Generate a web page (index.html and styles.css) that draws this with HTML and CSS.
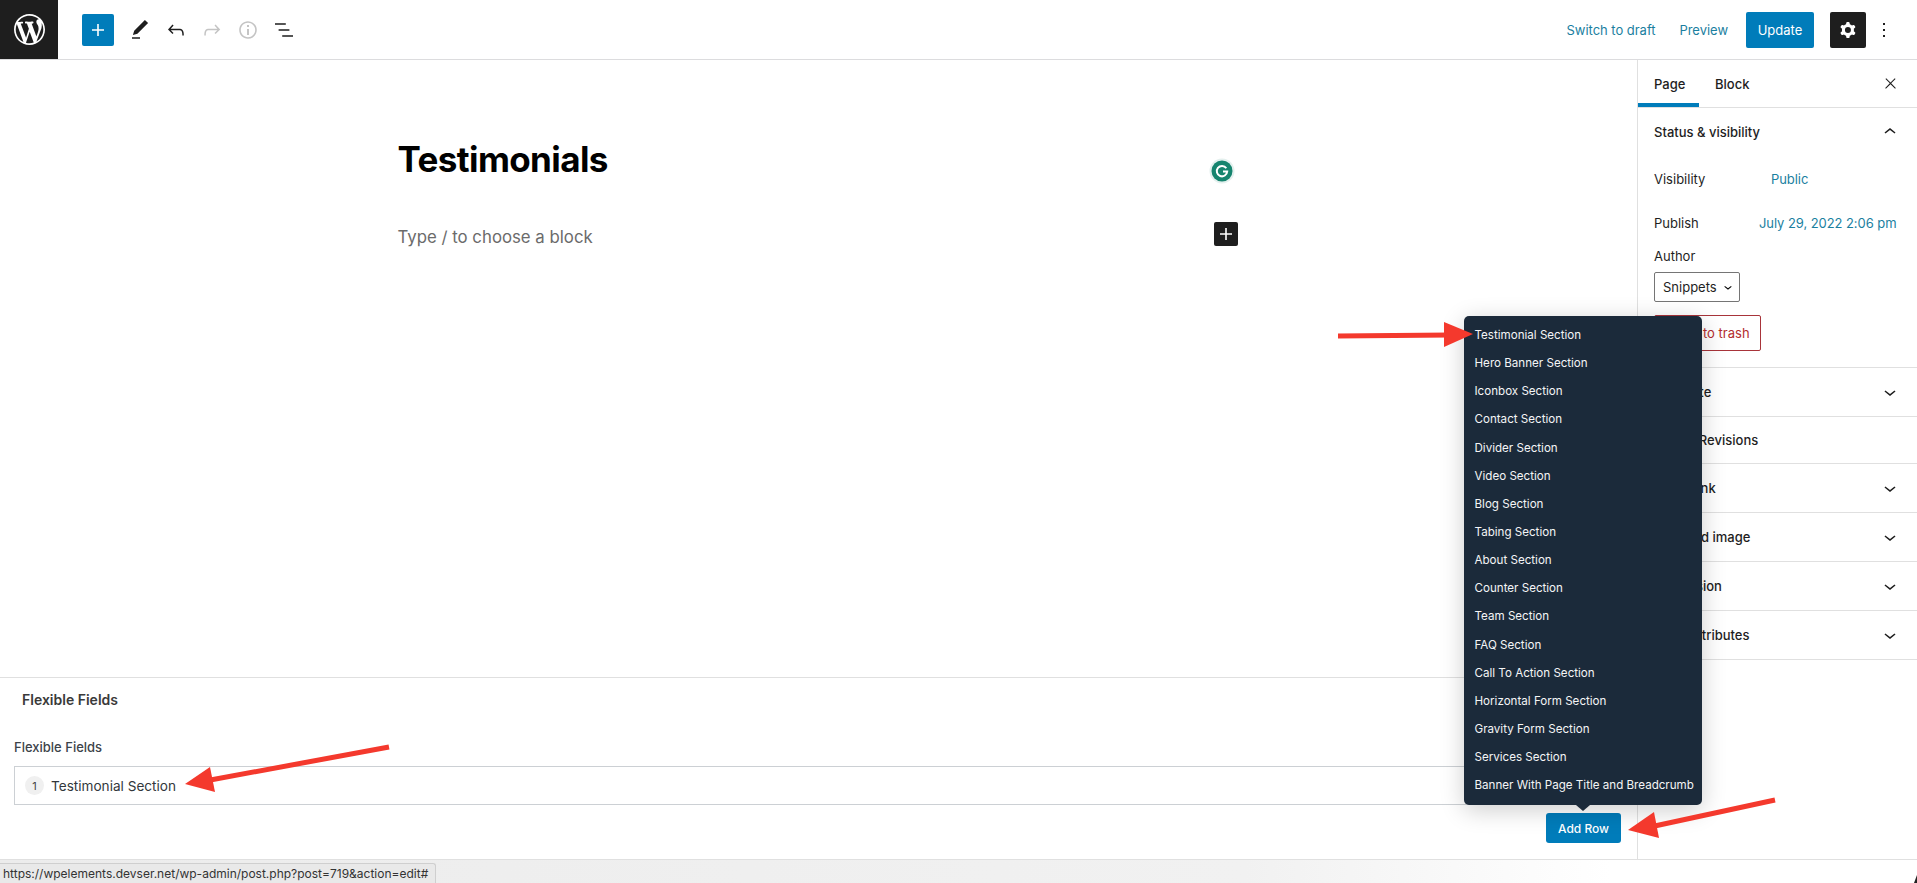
FILE: index.html
```html
<!DOCTYPE html>
<html lang="en">
<head>
<meta charset="utf-8">
<title>Edit Page</title>
<link rel="stylesheet" href="styles.css">
</head>
<body>
<div class="page">
  <header class="topbar">
    <a class="logo"><svg viewBox="0 0 20 20" width="31" height="31"><path fill="#fff" d="M20 10c0-5.51-4.49-10-10-10C4.48 0 0 4.49 0 10c0 5.52 4.48 10 10 10 5.51 0 10-4.48 10-10zM7.78 15.37L4.37 6.22c.55-.02 1.17-.08 1.17-.08.5-.06.44-1.13-.06-1.11 0 0-1.45.11-2.37.11-.18 0-.37 0-.58-.01C4.12 2.69 6.87 1.11 10 1.11c2.33 0 4.45.87 6.05 2.34-.68-.11-1.65.39-1.65 1.58 0 .74.45 1.36.9 2.1.35.61.55 1.36.55 2.46 0 1.49-1.4 5-1.4 5l-3.03-8.37c.54-.02.82-.17.82-.17.5-.05.44-1.25-.06-1.22 0 0-1.44.12-2.38.12-.87 0-2.33-.12-2.33-.12-.5-.03-.56 1.2-.06 1.22l.92.08 1.26 3.41zM17.41 10c.24-.64.74-1.87.43-4.25.7 1.29 1.05 2.71 1.05 4.25 0 3.29-1.73 6.24-4.4 7.78.97-2.59 1.94-5.2 2.92-7.78zM6.1 18.09C3.12 16.65 1.11 13.53 1.11 10c0-1.3.23-2.48.72-3.59C3.25 10.3 4.67 14.2 6.1 18.09zm4.03-6.63l2.58 6.98c-.86.29-1.76.45-2.71.45-.79 0-1.57-.11-2.29-.33.81-2.38 1.62-4.74 2.42-7.1z"/></svg></a>
    <div class="tools">
      <span class="add-btn"><svg viewBox="0 0 24 24" width="24" height="24"><path fill="#fff" d="M18 11.2h-5.2V6h-1.6v5.2H6v1.6h5.2V18h1.6v-5.2H18z"/></svg></span>
      <span class="tool"><svg viewBox="0 0 24 24" width="24" height="24"><path d="M20.1 5.1L16.9 2 6.2 12.7l-1.3 4.4 4.5-1.3L20.1 5.1zM4 20.8h8v-1.5H4v1.5z"/></svg></span>
      <span class="tool"><svg viewBox="0 0 24 24" width="24" height="24"><path d="M18.3 11.7c-.6-.6-1.4-.9-2.3-.9H6.7l2.9-3.3-1.1-1-4.5 5L8.5 16l1-1-2.7-2.7H16c.5 0 .9.2 1.3.5 1 1 1 3.4 1 4.5v.3h1.5v-.2c0-1.5 0-4.3-1.5-5.7z"/></svg></span>
      <span class="tool tool-off"><svg viewBox="0 0 24 24" width="24" height="24"><path d="M15.6 6.5l-1.1 1 2.9 3.3H8c-.9 0-1.7.3-2.3.9-1.4 1.5-1.4 4.2-1.4 5.6v.2h1.5v-.3c0-1.1 0-3.5 1-4.5.3-.3.7-.5 1.3-.5h9.2L14.5 15l1.1 1.1 4.6-4.6-4.6-5z"/></svg></span>
      <span class="tool tool-off"><svg viewBox="0 0 24 24" width="24" height="24"><path d="M12 3.2c-4.8 0-8.8 3.9-8.8 8.8 0 4.8 3.9 8.8 8.8 8.8 4.8 0 8.8-3.9 8.8-8.8 0-4.8-4-8.8-8.8-8.8zm0 16c-4 0-7.2-3.3-7.2-7.2C4.8 8 8 4.8 12 4.8s7.2 3.3 7.2 7.2c0 4-3.2 7.2-7.2 7.2zM11 17h2v-6h-2v6zm0-8h2V7h-2v2z"/></svg></span>
      <span class="tool"><svg viewBox="0 0 24 24" width="24" height="24"><path d="M13.8 5.2H3v1.5h10.8V5.2zm-3.6 12v1.5H21v-1.5H10.2zm7.2-6H6.6v1.5h10.8v-1.5z"/></svg></span>
    </div>
    <div class="actions">
      <a class="link link-draft">Switch to draft</a>
      <a class="link link-preview">Preview</a>
      <span class="update">Update</span>
      <span class="gear"><svg viewBox="0 0 24 24" width="24" height="24"><path fill="#fff" fill-rule="evenodd" d="M10.289 4.836A1 1 0 0111.275 4h1.306a1 1 0 01.987.836l.244 1.466c.787.26 1.503.679 2.108 1.218l1.393-.522a1 1 0 011.216.437l.653 1.13a1 1 0 01-.23 1.273l-1.148.944a6.025 6.025 0 010 2.435l1.149.946a1 1 0 01.23 1.272l-.653 1.13a1 1 0 01-1.216.437l-1.394-.522c-.605.54-1.32.958-2.108 1.218l-.244 1.466a1 1 0 01-.987.836h-1.306a1 1 0 01-.986-.836l-.244-1.466a5.995 5.995 0 01-2.108-1.218l-1.394.522a1 1 0 01-1.217-.436l-.653-1.131a1 1 0 01.23-1.272l1.149-.946a6.026 6.026 0 010-2.435l-1.148-.944a1 1 0 01-.23-1.272l.653-1.131a1 1 0 011.217-.437l1.393.522a5.994 5.994 0 012.108-1.218l.244-1.466zM14.929 12a3 3 0 11-6 0 3 3 0 016 0z"/></svg></span>
      <span class="tool"><svg viewBox="0 0 24 24" width="24" height="24"><path d="M13 19h-2v-2h2v2zm0-6h-2v-2h2v2zm0-6h-2V5h2v2z"/></svg></span>
    </div>
  </header>

  <div class="workspace">
    <main class="editor">
      <div class="canvas">
        <div class="doc">
          <h1 class="doc-title">Testimonials</h1>
          <p class="doc-placeholder">Type / to choose a block</p>
        </div>
      </div>
      <section class="metabox">
        <h2 class="metabox-title">Flexible Fields</h2>
        <div class="metabox-body">
          <div class="field-label">Flexible Fields</div>
          <div class="field-row"><span class="row-num">1</span><span class="row-name">Testimonial Section</span></div>
          <div class="field-foot"><span class="add-row">Add Row</span></div>
        </div>
      </section>
    </main>

    <aside class="sidebar">
      <div class="tabs">
        <span class="tab tab-on">Page</span>
        <span class="tab">Block</span>
        <svg class="tab-close" viewBox="0 0 24 24" width="17" height="17"><path d="M13 11.8l6.1-6.3-1-1-6.1 6.2-6.1-6.2-1 1 6.1 6.3-6.5 6.7 1 1 6.5-6.6 6.5 6.6 1-1z"/></svg>
      </div>
      <section class="status">
        <div class="panel-head"><span>Status &amp; visibility</span><svg viewBox="0 0 24 24" width="24" height="24"><path d="M6.5 12.4L12 8l5.5 4.4-.9 1.2L12 10l-4.5 3.6-1-1.2z"/></svg></div>
        <div class="status-row status-vis"><span>Visibility</span><a class="val val-public">Public</a></div>
        <div class="status-row status-pub"><span>Publish</span><a class="val val-date">July 29, 2022 2:06 pm</a></div>
        <div class="author-label">Author</div>
        <div class="author-select">Snippets<svg viewBox="0 0 24 24" width="16" height="16"><path d="M17.5 11.6L12 16l-5.5-4.4.9-1.2L12 14l4.5-3.6 1 1.2z"/></svg></div>
        <div class="trash">Move to trash</div>
      </section>
      <div class="panel"><span>Template</span><svg viewBox="0 0 24 24" width="24" height="24"><path d="M17.5 11.6L12 16l-5.5-4.4.9-1.2L12 14l4.5-3.6 1 1.2z"/></svg></div>
      <div class="panel panel-short"><span class="revisions">12 Revisions</span></div>
      <div class="panel"><span>Permalink</span><svg viewBox="0 0 24 24" width="24" height="24"><path d="M17.5 11.6L12 16l-5.5-4.4.9-1.2L12 14l4.5-3.6 1 1.2z"/></svg></div>
      <div class="panel"><span>Featured image</span><svg viewBox="0 0 24 24" width="24" height="24"><path d="M17.5 11.6L12 16l-5.5-4.4.9-1.2L12 14l4.5-3.6 1 1.2z"/></svg></div>
      <div class="panel"><span>Discussion</span><svg viewBox="0 0 24 24" width="24" height="24"><path d="M17.5 11.6L12 16l-5.5-4.4.9-1.2L12 14l4.5-3.6 1 1.2z"/></svg></div>
      <div class="panel"><span>Page Attributes</span><svg viewBox="0 0 24 24" width="24" height="24"><path d="M17.5 11.6L12 16l-5.5-4.4.9-1.2L12 14l4.5-3.6 1 1.2z"/></svg></div>
    </aside>
  </div>

  <footer class="browserbar"><span class="url">https://wpelements.devser.net/wp-admin/post.php?post=719&amp;action=edit#</span></footer>

  <svg class="grammarly" viewBox="0 0 26 26" width="26" height="26"><circle cx="13" cy="13" r="12.5" fill="#e4f0ee"/><circle cx="13" cy="13" r="10.5" fill="#15846e"/><path fill="none" stroke="#fff" stroke-width="2" d="M17.3 10.2a5.2 5.2 0 1 0 .9 3.3h-4.2"/></svg>
  <span class="inline-add"><svg viewBox="0 0 24 24" width="24" height="24"><path fill="#fff" d="M18 11.2h-5.2V6h-1.6v5.2H6v1.6h5.2V18h1.6v-5.2H18z"/></svg></span>

  <ul class="layout-menu">
    <li>Testimonial Section</li>
    <li>Hero Banner Section</li>
    <li>Iconbox Section</li>
    <li>Contact Section</li>
    <li>Divider Section</li>
    <li>Video Section</li>
    <li>Blog Section</li>
    <li>Tabing Section</li>
    <li>About Section</li>
    <li>Counter Section</li>
    <li>Team Section</li>
    <li>FAQ Section</li>
    <li>Call To Action Section</li>
    <li>Horizontal Form Section</li>
    <li>Gravity Form Section</li>
    <li>Services Section</li>
    <li>Banner With Page Title and Breadcrumb</li>
  </ul>

  <svg class="arrows" viewBox="0 0 1917 883" width="1917" height="883">
    <path class="arrow-line" d="M1338 336L1450 335"/>
    <path class="arrow-head" d="M1473 334L1444 322V347Z"/>
    <path class="arrow-line" d="M389 747L205 781"/>
    <path class="arrow-head" d="M185 784L210 767L215 792Z"/>
    <path class="arrow-line" d="M1775 800L1650 827"/>
    <path class="arrow-head" d="M1628 830L1654 812L1659 838Z"/>
  </svg>
  <span class="win-corner"></span>
</div>
</body>
</html>
```

FILE: styles.css
```css
* { box-sizing: border-box; }
html, body { margin: 0; height: 100%; }
body {
  background: #fff;
  color: #1e1e1e;
  font-family: Inter, "Liberation Sans", sans-serif;
  font-size: 13px;
  overflow: hidden;
}
.page {
  position: relative;
  width: 1917px;
  height: 883px;
  display: flex;
  flex-direction: column;
  overflow: hidden;
}

/* top bar */
.topbar {
  flex: 0 0 60px;
  display: flex;
  align-items: center;
  border-bottom: 1px solid #dcdcde;
}
.logo {
  width: 58px;
  height: 59px;
  background: #1e1e1e;
  display: flex;
  align-items: center;
  justify-content: center;
}
.tools { display: flex; align-items: center; margin-left: 24px; }
.add-btn {
  width: 32px;
  height: 32px;
  margin-right: 8px;
  background: #007cba;
  border-radius: 2px;
  display: flex;
  align-items: center;
  justify-content: center;
}
.tool {
  width: 36px;
  height: 36px;
  display: flex;
  align-items: center;
  justify-content: center;
}
.tool svg { fill: #1e1e1e; }
.tool-off svg { fill: #c4c4c4; }
.actions { margin-left: auto; display: flex; align-items: center; padding-right: 15px; }
.link { color: #1b7f9f; font-size: 13px; letter-spacing: -0.03px; }
.link-draft { margin-right: 24px; }
.link-preview { margin-right: 18px; }
.update {
  width: 68px;
  height: 36px;
  background: #007cba;
  color: #fff;
  border-radius: 2px;
  display: flex;
  align-items: center;
  justify-content: center;
  margin-right: 16px;
}
.gear {
  width: 36px;
  height: 36px;
  background: #1e1e1e;
  border-radius: 2px;
  display: flex;
  align-items: center;
  justify-content: center;
}

/* workspace */
.workspace { flex: 0 0 800px; display: flex; border-bottom: 1px solid #e0e0e0; }
.editor { flex: 1 1 auto; min-width: 0; display: flex; flex-direction: column; }
.canvas { flex: 1 1 auto; }
.doc { width: 842px; margin: 0 auto; padding-top: 77px; }
.doc-title {
  margin: 0;
  font-size: 35px;
  line-height: 44px;
  font-weight: 700;
  color: #000;
  letter-spacing: -0.6px;
}
.doc-placeholder {
  margin: 45px 0 0;
  font-size: 16.8px;
  line-height: 23px;
  color: #6b6b6b;
}

/* meta box */
.metabox { flex: 0 0 182px; border-top: 1px solid #e0e0e0; }
.metabox-title {
  margin: 0;
  padding: 13px 22px 0;
  font-size: 14px;
  line-height: 18px;
  font-weight: 600;
  color: #3a3a3a;
}
.metabox-body { padding: 30px 16px 0 14px; }
.field-label { font-size: 13px; line-height: 16px; font-weight: 500; color: #3c434a; }
.field-row {
  margin-top: 11px;
  height: 39px;
  border: 1px solid #ccd0d4;
  display: flex;
  align-items: center;
  padding-left: 10px;
}
.row-num {
  width: 19px;
  height: 19px;
  border-radius: 50%;
  background: #f0f0f0;
  color: #444;
  font-size: 11px;
  display: flex;
  align-items: center;
  justify-content: center;
  margin-right: 7px;
}
.row-name { font-size: 13.6px; color: #32373c; }
.field-foot { display: flex; justify-content: flex-end; margin-top: 8px; }
.add-row {
  width: 75px;
  height: 30px;
  background: #007cba;
  color: #fff;
  font-size: 12px;
  font-weight: 500;
  border-radius: 3px;
  display: flex;
  align-items: center;
  justify-content: center;
}

/* sidebar */
.sidebar { flex: 0 0 280px; border-left: 1px solid #e0e0e0; }
.tabs {
  position: relative;
  height: 48px;
  display: flex;
  border-bottom: 1px solid #e0e0e0;
}
.tab {
  height: 47px;
  padding: 0 16px;
  display: flex;
  align-items: center;
  font-weight: 500;
}
.tab-on { box-shadow: inset 0 -4px 0 #007cba; width: 61px; }
.tab-close { position: absolute; right: 18px; top: 15px; fill: #1e1e1e; }
.status { height: 260px; padding: 0 16px; border-bottom: 1px solid #e0e0e0; }
.panel-head {
  height: 48px;
  display: flex;
  align-items: center;
  justify-content: space-between;
  font-weight: 500;
}
.panel-head svg { margin-right: -1px; fill: #1e1e1e; }
.status-row { display: flex; line-height: 18px; }
.status-vis { margin-top: 14px; }
.status-pub { margin-top: 26px; }
.status-row > span { flex: 0 0 105px; }
.val { color: #1b7f9f; white-space: nowrap; letter-spacing: -0.07px; }
.val-public { margin-left: 12px; }
.author-label { margin-top: 15px; line-height: 18px; }
.author-select {
  margin-top: 7px;
  width: 86px;
  height: 30px;
  border: 1px solid #757575;
  border-radius: 2px;
  display: flex;
  align-items: center;
  padding-left: 8px;
}
.author-select svg { margin-left: 3px; }
.trash {
  margin-top: 13px;
  width: 107px;
  height: 36px;
  border: 1px solid #a8343a;
  border-radius: 2px;
  color: #b32d2e;
  display: flex;
  align-items: center;
  justify-content: center;
}
.panel {
  height: 49px;
  padding: 0 15px 0 16px;
  display: flex;
  align-items: center;
  justify-content: space-between;
  font-weight: 500;
  border-bottom: 1px solid #e0e0e0;
}
.panel svg { fill: #1e1e1e; }
.panel-short { height: 47px; }
.revisions { margin-left: 28px; }

/* browser status strip */
.browserbar {
  flex: 1 1 auto;
  display: flex;
  align-items: flex-end;
  background: linear-gradient(to right, #ececec 0, #f1f1f1 65%, #fff 84%);
}
.url {
  width: 436px;
  height: 20px;
  padding-left: 3px;
  background: #e9e9e9;
  border: 1px solid #cfcfcf;
  border-width: 1px 1px 0 0;
  border-top-right-radius: 3px;
  font-size: 12px;
  line-height: 19px;
  color: #333;
  white-space: nowrap;
}

/* overlays */
.grammarly { position: absolute; left: 1209px; top: 158px; }
.inline-add {
  position: absolute;
  left: 1214px;
  top: 222px;
  width: 24px;
  height: 24px;
  background: #1e1e1e;
  border-radius: 2px;
  display: flex;
  align-items: center;
  justify-content: center;
}
.layout-menu {
  position: absolute;
  left: 1464px;
  top: 316px;
  width: 238px;
  height: 489px;
  margin: 0;
  padding: 5px 0;
  list-style: none;
  background: #1b2a3a;
  border-radius: 5px;
  box-shadow: 0 5px 25px rgba(0, 0, 0, 0.2);
}
.layout-menu::after {
  content: "";
  position: absolute;
  left: 112px;
  bottom: -6px;
  border: 7px solid transparent;
  border-bottom: 0;
  border-top: 6px solid #1b2a3a;
}
.layout-menu li {
  height: 28.15px;
  line-height: 28.15px;
  padding-left: 10.5px;
  color: #f4f5f6;
  font-size: 11.6px;
  font-weight: 400;
  white-space: nowrap;
}
.arrows { position: absolute; left: 0; top: 0; pointer-events: none; }
.arrow-line { fill: none; stroke: #f4392d; stroke-width: 5; }
.arrow-head { fill: #f4392d; }
.win-corner {
  position: absolute;
  right: 0;
  bottom: 0;
  width: 3px;
  height: 8px;
  background: #222;
  clip-path: polygon(100% 0, 100% 100%, 0 100%);
}
```
